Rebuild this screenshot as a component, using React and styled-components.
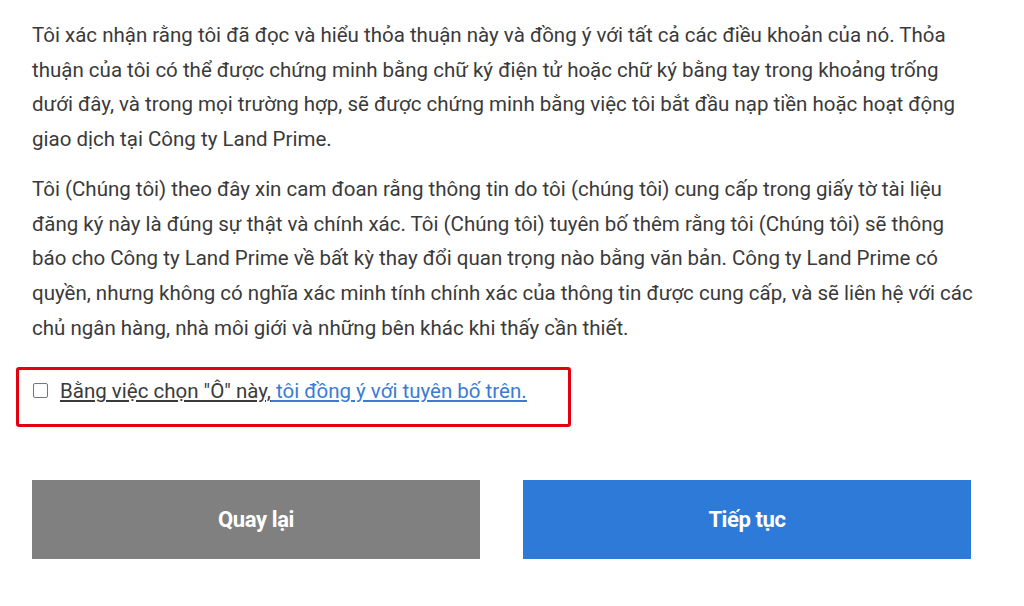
import React from "react";
import styled, { createGlobalStyle } from "styled-components";

const Global = createGlobalStyle`
  html, body { margin: 0; padding: 0; background: #fff; }
  body { font-family: Roboto, "Noto Sans", sans-serif; }
`;

const Page = styled.div`
  width: 945px;
  padding: 18px 0 0 32px;
`;

const Para = styled.p`
  margin: 0 0 15px;
  font-size: 20.5px;
  line-height: 34.7px;
  color: #3a3a3a;
`;

const ConsentBox = styled.div`
  box-sizing: border-box;
  margin: 22px 0 0 -16px;
  width: 555px;
  height: 60px;
  border: 3px solid #e4000f;
  border-radius: 3px;
  display: flex;
  align-items: flex-start;
  padding: 9px 0 0 14px;
`;

const Check = styled.span`
  width: 13px;
  height: 13px;
  border: 1px solid #767676;
  border-radius: 2px;
  margin: 4px 12px 0 0;
  background: #fff;
  flex: none;
`;

const Label = styled.span`
  font-size: 20.5px;
  line-height: 24px;
  color: #3a3a3a;
  text-decoration: underline;
`;

const Link = styled.a`
  color: #3b7bd4;
  text-decoration: underline;
`;

const Buttons = styled.div`
  display: flex;
  gap: 43px;
  margin-top: 53px;
`;

const Button = styled.button`
  width: 448px;
  height: 79px;
  border: none;
  background: ${(p) => (p.$primary ? "#2d7ad8" : "#808080")};
  color: #fff;
  font-family: Roboto, sans-serif;
  font-weight: 700;
  font-size: 22px;
  letter-spacing: -0.4px;
`;

export default function App() {
  return (
    <Page>
      <Global />
      <Para>
        Tôi xác nhận rằng tôi đã đọc và hiểu thỏa thuận này và đồng ý với tất cả các điều khoản của nó. Thỏa
        thuận của tôi có thể được chứng minh bằng chữ ký điện tử hoặc chữ ký bằng tay trong khoảng trống
        dưới đây, và trong mọi trường hợp, sẽ được chứng minh bằng việc tôi bắt đầu nạp tiền hoặc hoạt động
        giao dịch tại Công ty Land Prime.
      </Para>
      <Para>
        Tôi (Chúng tôi) theo đây xin cam đoan rằng thông tin do tôi (chúng tôi) cung cấp trong giấy tờ tài liệu
        đăng ký này là đúng sự thật và chính xác. Tôi (Chúng tôi) tuyên bố thêm rằng tôi (Chúng tôi) sẽ thông
        báo cho Công ty Land Prime về bất kỳ thay đổi quan trọng nào bằng văn bản. Công ty Land Prime có
        quyền, nhưng không có nghĩa xác minh tính chính xác của thông tin được cung cấp, và sẽ liên hệ với các
        chủ ngân hàng, nhà môi giới và những bên khác khi thấy cần thiết.
      </Para>
      <ConsentBox>
        <Check />
        <Label>
          Bằng việc chọn "Ô" này,<Link href="#"> tôi đồng ý với tuyên bố trên.</Link>
        </Label>
      </ConsentBox>
      <Buttons>
        <Button>Quay lại</Button>
        <Button $primary>Tiếp tục</Button>
      </Buttons>
    </Page>
  );
}
